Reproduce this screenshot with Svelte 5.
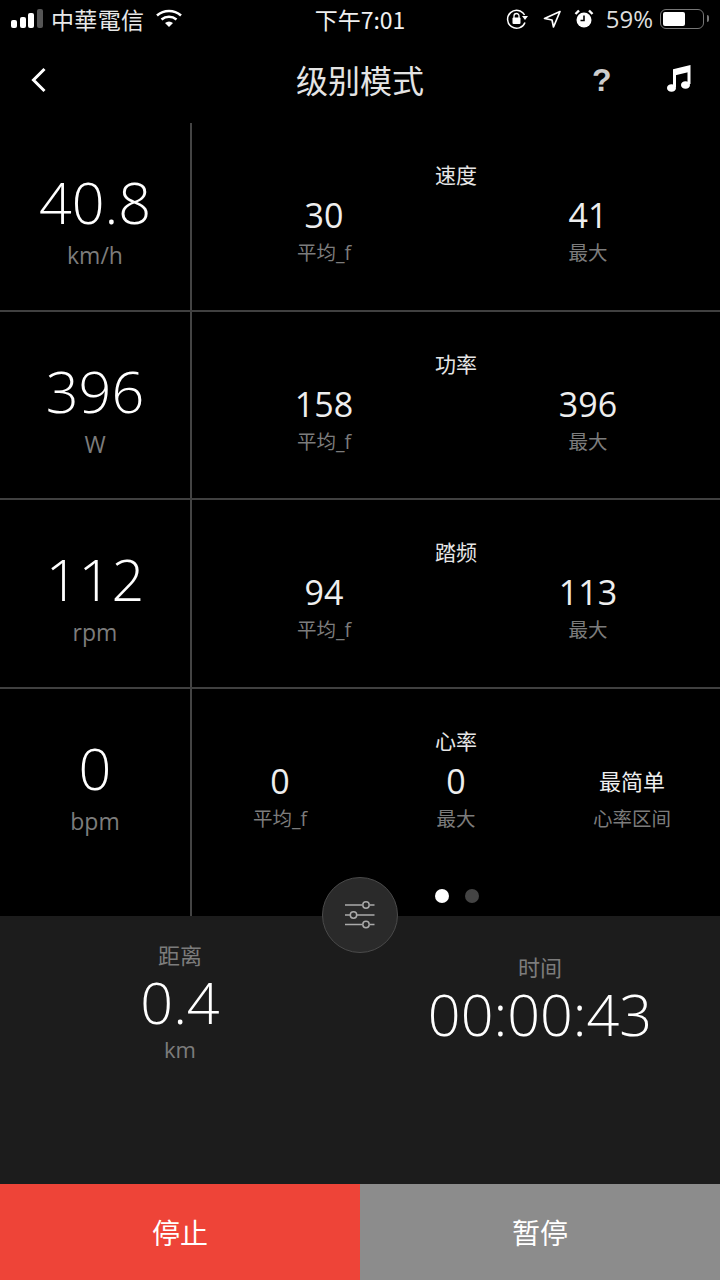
<script lang="ts">
  const rows = [
    { value: '40.8', unit: 'km/h', title: '速度', stats: [['30', '平均_f'], ['41', '最大']] },
    { value: '396', unit: 'W', title: '功率', stats: [['158', '平均_f'], ['396', '最大']] },
    { value: '112', unit: 'rpm', title: '踏频', stats: [['94', '平均_f'], ['113', '最大']] }
  ];
</script>

<div class="screen">
  <div class="status">
    <div class="status-left">
      <div class="signal"><i></i><i></i><i></i><i class="off"></i></div>
      <span class="carrier">中華電信</span>
      <svg class="wifi" width="28" height="20" viewBox="0 0 28 20">
        <path d="M2 7.500C9 1.500 19 1.500 26 7.500" fill="none" stroke="#fff" stroke-width="2.600" />
        <path d="M6.500 11.500C11 7.800 17 7.800 21.500 11.500" fill="none" stroke="#fff" stroke-width="2.600" />
        <path d="M10 15C12.500 13 15.500 13 18 15L14 19Z" fill="#fff" />
      </svg>
    </div>
    <span class="clock">下午7:01</span>
    <div class="status-right">
      <svg width="24" height="22" viewBox="0 0 24 22">
        <path d="M19 14.500A9 9 0 1 1 18.500 7" fill="none" stroke="#fff" stroke-width="1.500" />
        <path d="M16 8h6l-3 4Z" fill="#fff" />
        <rect x="6.500" y="9.500" width="8" height="6.500" rx="1" fill="#fff" />
        <path d="M8 10V8a2.500 2.500 0 0 1 5 0v2" fill="none" stroke="#fff" stroke-width="1.300" />
      </svg>
      <svg class="arrow" width="20" height="20" viewBox="0 0 20 20">
        <path d="M18 2.500L2.500 9.500L10 11L11.500 18Z" fill="none" stroke="#fff" stroke-width="1.700" stroke-linejoin="round" />
      </svg>
      <svg class="alarm" width="20" height="20" viewBox="0 0 20 20">
        <circle cx="10" cy="11" r="7.500" fill="#fff" />
        <path d="M10 6.500V11.500H6.500" fill="none" stroke="#000" stroke-width="1.600" />
        <path d="M1.500 5L5 1.500M18.500 5L15 1.500" stroke="#fff" stroke-width="2.400" />
      </svg>
      <span class="pct">59%</span>
      <div class="battery"><div class="level" style="width: 59%"></div></div>
      <div class="nub"></div>
    </div>
  </div>

  <div class="nav">
    <svg class="back" width="20" height="28" viewBox="0 0 20 28">
      <path d="M15.500 3L4.500 14L15.500 25" fill="none" stroke="#fff" stroke-width="3" />
    </svg>
    <h1>级别模式</h1>
    <span class="help">?</span>
    <svg class="music" width="26" height="30" viewBox="0 0 26 30">
      <path d="M8.500 23V6.500L23 3V20" fill="none" stroke="#fff" stroke-width="3" />
      <path d="M8.500 6.500L23 3V8L8.500 11.500Z" fill="#fff" />
      <ellipse cx="5.500" cy="24" rx="4.500" ry="3.800" fill="#fff" />
      <ellipse cx="19.500" cy="21" rx="4.500" ry="3.800" fill="#fff" />
    </svg>
  </div>

  <div class="grid">
    {#each rows as row}
      <div class="row">
        <div class="main">
          <div class="big">{row.value}</div>
          <div class="unit">{row.unit}</div>
        </div>
        <div class="detail">
          <div class="title">{row.title}</div>
          <div class="stats two">
            {#each row.stats as s}
              <div class="stat">
                <div class="num">{s[0]}</div>
                <div class="lbl">{s[1]}</div>
              </div>
            {/each}
          </div>
        </div>
      </div>
    {/each}

    <div class="row last">
      <div class="main">
        <div class="big">0</div>
        <div class="unit">bpm</div>
      </div>
      <div class="detail">
        <div class="title">心率</div>
        <div class="stats three">
          <div class="stat"><div class="num">0</div><div class="lbl">平均_f</div></div>
          <div class="stat"><div class="num">0</div><div class="lbl">最大</div></div>
          <div class="stat"><div class="num word">最简单</div><div class="lbl">心率区间</div></div>
        </div>
        <div class="dots"><i class="on"></i><i></i></div>
      </div>
    </div>
  </div>

  <div class="panel">
    <div class="fab">
      <svg width="32" height="28" viewBox="0 0 32 28">
        <g stroke="#aaa" stroke-width="1.500" fill="none">
          <path d="M1 4H18M26 4H30.500" />
          <path d="M1 14H6M13 14H30.500" />
          <path d="M1 23.500H18M26 23.500H30.500" />
          <circle cx="22" cy="4" r="3.200" />
          <circle cx="9.500" cy="14" r="3.200" />
          <circle cx="22" cy="23.500" r="3.200" />
        </g>
      </svg>
    </div>
    <div class="summary dist">
      <div class="sum-label">距离</div>
      <div class="sum-big">0.4</div>
      <div class="sum-unit">km</div>
    </div>
    <div class="summary time">
      <div class="sum-label">时间</div>
      <div class="sum-big">00:00:43</div>
    </div>
  </div>

  <div class="actions">
    <button type="button" class="stop">停止</button>
    <button type="button" class="pause">暂停</button>
  </div>
</div>

<style>
  :global(body) {
    margin: 0;
    background: #000;
  }

  .screen {
    width: 720px;
    height: 1280px;
    display: flex;
    flex-direction: column;
    overflow: hidden;
    background: #000;
    color: #fff;
    font-family: 'Open Sans', 'Noto Sans CJK SC', sans-serif;
  }

  .status {
    height: 40px;
    box-sizing: border-box;
    display: grid;
    grid-template-columns: 1fr auto 1fr;
    align-items: center;
    padding: 0 11px 3px;
    flex: none;
  }

  .status-left,
  .status-right {
    display: flex;
    align-items: center;
  }

  .status-right {
    justify-content: flex-end;
  }

  .signal {
    display: flex;
    align-items: flex-end;
    gap: 2.700px;
    margin-right: 8px;
  }

  .signal i {
    width: 6px;
    border-radius: 2px;
    background: #fff;
    height: 8px;
  }

  .signal i:nth-child(2) { height: 11px; }
  .signal i:nth-child(3) { height: 15px; }
  .signal i:nth-child(4) { height: 19px; }
  .signal i.off { background: #555; }

  .carrier {
    font-family: 'Noto Sans CJK TC', sans-serif;
    font-size: 23px;
    color: #e8e8e8;
    letter-spacing: 0.3px;
  }

  .wifi {
    margin-left: 11px;
    margin-top: -2px;
  }

  .clock {
    font-family: 'Noto Sans CJK SC', sans-serif;
    font-size: 23px;
    color: #f0f0f0;
  }

  .status-right .arrow { margin-left: 12px; }
  .status-right .alarm { margin-left: 12px; }

  .pct {
    font-family: 'Open Sans', sans-serif;
    font-size: 24px;
    color: #ddd;
    margin-left: 12px;
  }

  .battery {
    width: 44px;
    height: 20px;
    margin-left: 7px;
    padding: 2px;
    box-sizing: border-box;
    border: 1.500px solid #777;
    border-radius: 6px;
  }

  .level {
    height: 100%;
    background: #fff;
    border-radius: 2px;
  }

  .nub {
    width: 2px;
    height: 7px;
    margin-left: 3px;
    background: #777;
    border-radius: 0 2px 2px 0;
  }

  .nav {
    height: 83px;
    position: relative;
    flex: none;
    display: flex;
    align-items: center;
    justify-content: center;
  }

  h1 {
    margin: 0;
    font-size: 32px;
    font-weight: 400;
    color: #e4e4e4;
    transform: translateY(-3px);
  }

  .back {
    position: absolute;
    left: 29px;
    top: 26px;
  }

  .help {
    position: absolute;
    left: 592px;
    top: 22px;
    font-family: 'Liberation Sans', sans-serif;
    font-weight: 700;
    font-size: 32px;
    color: #ccc;
  }

  .music {
    position: absolute;
    left: 666px;
    top: 24px;
  }

  .grid {
    height: 793px;
    flex: none;
    display: flex;
    flex-direction: column;
  }

  .row {
    height: 186.500px;
    flex: none;
    display: flex;
    border-bottom: 2px solid #404040;
    box-sizing: content-box;
  }

  .row.last {
    flex: 1;
    border-bottom: 0;
  }

  .main {
    width: 192px;
    flex: none;
    box-sizing: border-box;
    border-right: 2px solid #444;
    text-align: center;
    padding-top: 43px;
  }

  .big {
    font-size: 57.500px;
    font-weight: 300;
    line-height: 72px;
  }

  .unit {
    font-size: 23px;
    line-height: 28px;
    color: #7c7c7c;
    margin-top: 3px;
  }

  .detail {
    flex: 1;
    position: relative;
    text-align: center;
    padding-top: 38px;
  }

  .title {
    font-size: 21px;
    line-height: 28px;
    color: #e6e6e6;
  }

  .stats {
    display: grid;
    margin-top: 3px;
  }

  .stats.two {
    grid-template-columns: 1fr 1fr;
  }

  .stats.three {
    grid-template-columns: 1fr 1fr 1fr;
  }

  .num {
    font-size: 34px;
    line-height: 47px;
    color: #eee;
  }

  .num.word {
    font-size: 22px;
  }

  .lbl {
    font-size: 19.500px;
    line-height: 24px;
    color: #7c7c7c;
    margin-top: 2px;
  }

  .dots {
    position: absolute;
    left: 243px;
    top: 200px;
    display: flex;
    gap: 16px;
  }

  .dots i {
    width: 14px;
    height: 14px;
    border-radius: 50%;
    background: #444;
  }

  .dots i.on {
    background: #fff;
  }

  .panel {
    height: 268px;
    flex: none;
    position: relative;
    display: grid;
    grid-template-columns: 1fr 1fr;
    background: #1c1c1c;
    text-align: center;
  }

  .fab {
    position: absolute;
    left: 322px;
    top: -39px;
    width: 76px;
    height: 76px;
    box-sizing: border-box;
    border: 1.500px solid #4a4a4a;
    border-radius: 50%;
    background: #2a2a2a;
    display: flex;
    align-items: center;
    justify-content: center;
  }

  .summary.dist { padding-top: 25px; }
  .summary.time { padding-top: 37px; }

  .sum-label {
    font-size: 22px;
    line-height: 28px;
    color: #7c7c7c;
  }

  .sum-big {
    font-size: 57.500px;
    font-weight: 300;
    line-height: 66px;
  }

  .sum-unit {
    font-size: 22px;
    line-height: 28px;
    color: #7c7c7c;
  }

  .actions {
    height: 96px;
    flex: none;
    display: grid;
    grid-template-columns: 1fr 1fr;
  }

  button {
    border: 0;
    padding: 0;
    color: #fff;
    font-family: inherit;
    font-size: 28px;
  }

  .stop { background: #ee4438; }
  .pause { background: #8c8c8c; }
</style>
